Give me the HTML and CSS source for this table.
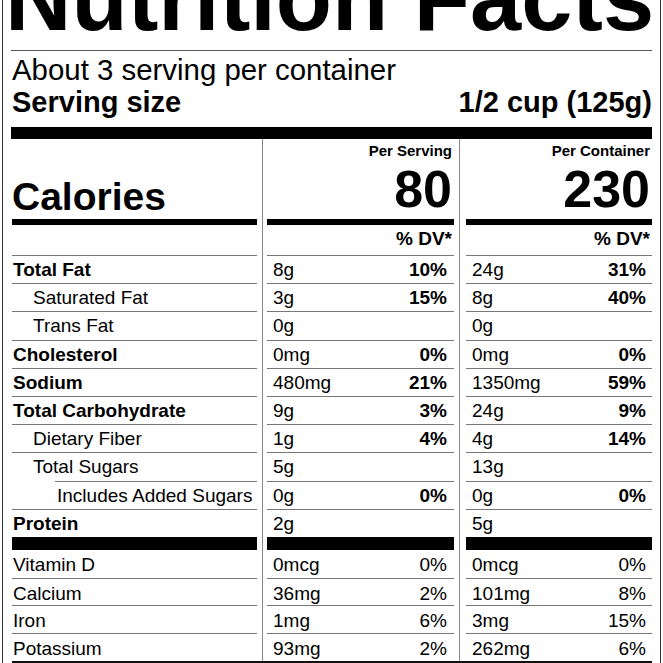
FILE: index.html
```html
<!DOCTYPE html>
<html lang="en">
<head>
<meta charset="utf-8">
<title>Nutrition Facts</title>
<link rel="stylesheet" href="styles.css">
</head>
<body>
<div class="label">
  <h1 class="title">Nutrition Facts</h1>
  <div class="rule"></div>
  <div class="servings">About 3 serving per container</div>
  <div class="size"><span>Serving size</span><span>1/2 cup (125g)</span></div>
  <div class="bar"></div>

  <div class="facts">
    <div class="col col-name">
      <div class="head">Calories</div>
      <div class="thick"></div>
      <div class="dv"></div>
      <div class="row"><b>Total Fat</b></div>
      <div class="row ind1">Saturated Fat</div>
      <div class="row ind1">Trans Fat</div>
      <div class="row"><b>Cholesterol</b></div>
      <div class="row"><b>Sodium</b></div>
      <div class="row"><b>Total Carbohydrate</b></div>
      <div class="row ind1">Dietary Fiber</div>
      <div class="row ind1">Total Sugars</div>
      <div class="row ind2">Includes Added Sugars</div>
      <div class="row"><b>Protein</b></div>
      <div class="midbar"></div>
      <div class="vrow">Vitamin D</div>
      <div class="vrow">Calcium</div>
      <div class="vrow">Iron</div>
      <div class="vrow">Potassium</div>
    </div>

    <div class="col col-amt col-serv">
      <div class="head">
        <div class="per">Per Serving</div>
        <div class="kcal">80</div>
      </div>
      <div class="thick"></div>
      <div class="dv">% DV*</div>
      <div class="row"><span>8g</span><b>10%</b></div>
      <div class="row"><span>3g</span><b>15%</b></div>
      <div class="row"><span>0g</span></div>
      <div class="row"><span>0mg</span><b>0%</b></div>
      <div class="row"><span>480mg</span><b>21%</b></div>
      <div class="row"><span>9g</span><b>3%</b></div>
      <div class="row"><span>1g</span><b>4%</b></div>
      <div class="row"><span>5g</span></div>
      <div class="row"><span>0g</span><b>0%</b></div>
      <div class="row"><span>2g</span></div>
      <div class="midbar"></div>
      <div class="vrow"><span>0mcg</span><span>0%</span></div>
      <div class="vrow"><span>36mg</span><span>2%</span></div>
      <div class="vrow"><span>1mg</span><span>6%</span></div>
      <div class="vrow"><span>93mg</span><span>2%</span></div>
    </div>

    <div class="col col-amt col-cont">
      <div class="head">
        <div class="per">Per Container</div>
        <div class="kcal">230</div>
      </div>
      <div class="thick"></div>
      <div class="dv">% DV*</div>
      <div class="row"><span>24g</span><b>31%</b></div>
      <div class="row"><span>8g</span><b>40%</b></div>
      <div class="row"><span>0g</span></div>
      <div class="row"><span>0mg</span><b>0%</b></div>
      <div class="row"><span>1350mg</span><b>59%</b></div>
      <div class="row"><span>24g</span><b>9%</b></div>
      <div class="row"><span>4g</span><b>14%</b></div>
      <div class="row"><span>13g</span></div>
      <div class="row"><span>0g</span><b>0%</b></div>
      <div class="row"><span>5g</span></div>
      <div class="midbar"></div>
      <div class="vrow"><span>0mcg</span><span>0%</span></div>
      <div class="vrow"><span>101mg</span><span>8%</span></div>
      <div class="vrow"><span>3mg</span><span>15%</span></div>
      <div class="vrow"><span>262mg</span><span>6%</span></div>
    </div>
  </div>
  <div class="endrule"></div>
</div>
</body>
</html>
```

FILE: styles.css
```css
* { box-sizing: border-box; }

html {
  overflow: hidden;
  background: #fff;
}

body {
  margin: 0;
  padding: 0;
  font-family: "Liberation Sans", Arial, Helvetica, sans-serif;
  color: #000;
}

.label {
  display: flow-root;
  margin-left: 2px;
  width: 659px;
  height: 663px;
  border-left: 1px solid #333;
  border-right: 1px solid #333;
  padding: 0 8px 0 9px;
}

.title {
  margin: -48px 0 0 -7px;
  font-size: 92px;
  line-height: 92px;
  font-weight: 700;
  white-space: nowrap;
}

.rule {
  height: 1px;
  background: #555;
  margin: 6px 0 0 -1px;
}

.servings {
  margin-top: 2px;
  font-size: 29.4px;
  line-height: 33px;
}

.size {
  display: flex;
  justify-content: space-between;
  font-size: 29px;
  line-height: 33px;
  font-weight: 700;
}

.bar {
  height: 12px;
  margin: 8px 0 0 -1px;
  background: #000;
}

.facts {
  display: flex;
}

.col {
  display: flex;
  flex-direction: column;
}

.col-name {
  width: 245px;
  margin-right: 5px;
}

.col-serv {
  width: 197px;
  border-left: 1px solid #888;
  padding: 0 5px 0 4px;
}

.col-cont {
  width: 193px;
  border-left: 1px solid #888;
  padding: 0 0 0 6px;
}

.head {
  height: 80px;
}

.col-name .head {
  display: flex;
  align-items: flex-end;
  padding-bottom: 3px;
  font-size: 39px;
  line-height: 39px;
  font-weight: 700;
}

.col-amt .head {
  padding: 3px 2px 0 0;
  text-align: right;
}

.per {
  font-size: 15px;
  line-height: 18px;
  font-weight: 700;
}

.kcal {
  margin-top: 3px;
  font-size: 52px;
  line-height: 52px;
  font-weight: 700;
}

.thick {
  height: 6px;
  background: #000;
}

.dv {
  height: 30px;
  padding-right: 2px;
  font-size: 19px;
  line-height: 27px;
  font-weight: 700;
  text-align: right;
}

.row {
  display: flex;
  justify-content: space-between;
  height: 28.2px;
  border-top: 1px solid #777;
  font-size: 19px;
  line-height: 27.2px;
  white-space: nowrap;
}

.col-name .row {
  padding-left: 1px;
}

.col-name .ind1 {
  padding-left: 21px;
}

.col-name .ind2 {
  margin-left: 43px;
  padding-left: 2px;
}

.col-serv .row,
.col-serv .vrow {
  padding-left: 6px;
  padding-right: 7px;
}

.col-cont .row,
.col-cont .vrow {
  padding-left: 6px;
  padding-right: 6px;
}

.midbar {
  height: 13px;
  background: #000;
}

.vrow {
  display: flex;
  justify-content: space-between;
  height: 27.75px;
  padding-top: 4px;
  border-top: 1px solid #777;
  font-size: 19px;
  line-height: 22px;
  white-space: nowrap;
}

.midbar + .vrow {
  border-top: 0;
}

.col-name .vrow {
  padding-left: 1px;
}

.endrule {
  height: 2px;
  background: #111;
}
```
